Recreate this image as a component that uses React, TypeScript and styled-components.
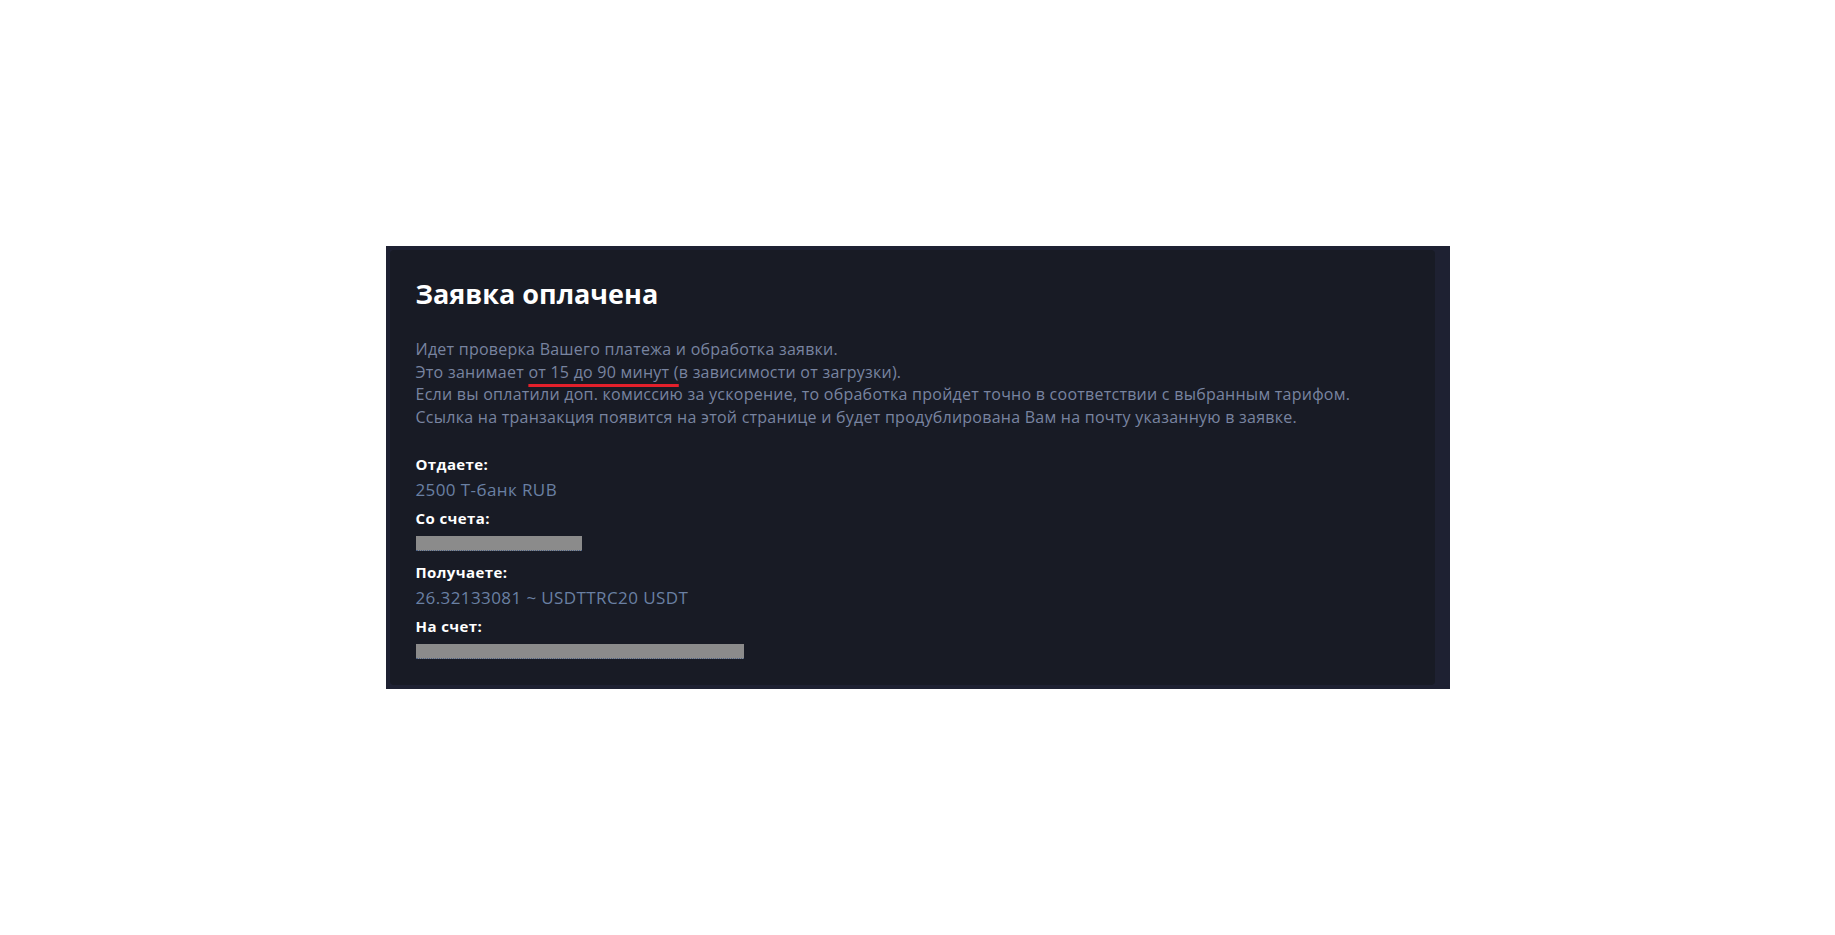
import { FC } from "react";
import styled, { createGlobalStyle } from "styled-components";

const GlobalStyle = createGlobalStyle`
  html, body {
    margin: 0;
    padding: 0;
    background: #ffffff;
  }

  body {
    font-family: "Open Sans", "Noto Sans", sans-serif;
  }
`;

const Page = styled.main`
  min-height: 100vh;
  display: flex;
  align-items: center;
  justify-content: center;
`;

const Frame = styled.div`
  width: 1064px;
  height: 443px;
  box-sizing: border-box;
  padding: 4px 15px 4px 4px;
  background: #1e2132;
`;

const Card = styled.section`
  height: 100%;
  box-sizing: border-box;
  padding: 26px 26px 17px 26px;
  background: #181b25;
  border-radius: 4px;
  overflow: hidden;

  h1 {
    margin: 0 0 26px 0;
    font-size: 27px;
    line-height: 36px;
    font-weight: 700;
    color: #ffffff;
  }

  p {
    margin: 0 0 24px 0;
    font-size: 16px;
    line-height: 22.5px;
    letter-spacing: 0.25px;
    color: #7884a0;
  }
`;

const Marked = styled.span`
  text-decoration: underline;
  text-decoration-color: #e3202b;
  text-decoration-thickness: 2.5px;
  text-underline-offset: 6px;
`;

const Details = styled.dl`
  margin: 0;
  display: flex;
  flex-direction: column;
  gap: 4px;

  div {
    display: flex;
    flex-direction: column;
  }

  dt {
    font-size: 15px;
    line-height: 25px;
    font-weight: 700;
    letter-spacing: 0.4px;
    color: #ffffff;
  }

  dd {
    margin: 0;
    height: 25px;
    font-size: 17px;
    line-height: 25px;
    letter-spacing: 0.4px;
    color: #6a80a3;
  }
`;

const Hidden = styled.span<{ $width: number }>`
  display: block;
  margin-top: 5px;
  width: ${({ $width }) => $width}px;
  height: 14px;
  background: #8b8b8b;
  border-bottom: 1px dotted #4d6284;
`;

interface IRow {
  label: string
  value?: string
  hidden?: number
}

const rows: IRow[] = [
  { label: "Отдаете:", value: "2500 Т-банк RUB" },
  { label: "Со счета:", hidden: 166 },
  { label: "Получаете:", value: "26.32133081 ~ USDTTRC20 USDT" },
  { label: "На счет:", hidden: 328 },
];

const App: FC = () => {
  return (
    <>
      <GlobalStyle />
      <Page>
        <Frame>
          <Card>
            <h1>Заявка оплачена</h1>
            <p>
              Идет проверка Вашего платежа и обработка заявки.
              <br />
              Это занимает <Marked>от 15 до 90 минут (</Marked>в зависимости от загрузки).
              <br />
              Если вы оплатили доп. комиссию за ускорение, то обработка пройдет точно в соответствии с выбранным тарифом.
              <br />
              Ссылка на транзакция появится на этой странице и будет продублирована Вам на почту указанную в заявке.
            </p>
            <Details>
              {rows.map((row) => (
                <div key={row.label}>
                  <dt>{row.label}</dt>
                  <dd>{row.hidden ? <Hidden $width={row.hidden} /> : row.value}</dd>
                </div>
              ))}
            </Details>
          </Card>
        </Frame>
      </Page>
    </>
  );
};

export default App;
